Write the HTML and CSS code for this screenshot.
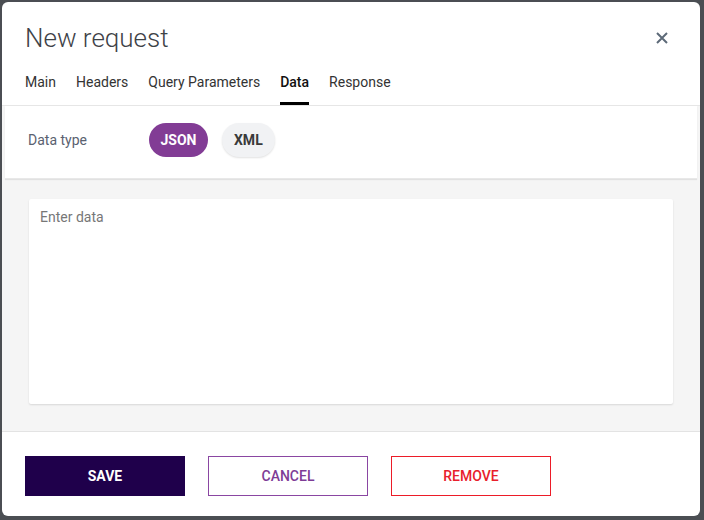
FILE: index.html
```
<!DOCTYPE html>
<html lang="en">
<head>
    <meta charset="UTF-8">
    <meta name="viewport" content="width=device-width, initial-scale=1.0">
    <title>New request</title>
    <link rel="stylesheet" href="styles.css">
</head>
<body>

<div class="dialog">
    <div class="dialog-header">
        <div class="title-row">
            <h1 class="title">New request</h1>
            <button class="close" aria-label="Close">
                <svg width="12" height="12" viewBox="0 0 12 12">
                    <path d="M1 1 L11 11 M11 1 L1 11" stroke="#5d6a78" stroke-width="2" fill="none"/>
                </svg>
            </button>
        </div>
        <div class="tabs">
            <div class="tab">Main</div>
            <div class="tab">Headers</div>
            <div class="tab">Query Parameters</div>
            <div class="tab active">Data</div>
            <div class="tab">Response</div>
        </div>
    </div>

    <div class="dialog-body">
        <div class="type-card">
            <span class="type-label">Data type</span>
            <div class="chips">
                <button class="chip selected">JSON</button>
                <button class="chip">XML</button>
            </div>
        </div>
        <textarea class="data-input" placeholder="Enter data"></textarea>
    </div>

    <div class="dialog-footer">
        <button class="btn btn-save">SAVE</button>
        <button class="btn btn-cancel">CANCEL</button>
        <button class="btn btn-remove">REMOVE</button>
    </div>
</div>

</body>
</html>
```

FILE: styles.css
```
body {
    margin: 0;
    background-color: #4b4e53;
    font-family: Roboto, "Liberation Sans", Arial, sans-serif;
}
.dialog {
    box-sizing: border-box;
    width: 698px;
    height: 514px;
    margin: 2px 0 0 2px;
    background-color: white;
    border-radius: 6px;
    overflow: hidden;
    display: flex;
    flex-direction: column;
}
.dialog-header {
    padding: 20px 24px 0 23px;
    border-bottom: 1px solid #e6e6e6;
}
.title-row {
    display: flex;
    align-items: center;
    justify-content: space-between;
}
.title {
    margin: 0;
    font-size: 26px;
    line-height: 32px;
    font-weight: 300;
    color: #3e4247;
}
.close {
    border: none;
    background: none;
    padding: 0;
    margin-right: 8px;
    display: flex;
    cursor: pointer;
}
.tabs {
    display: flex;
    gap: 20px;
    margin-top: 18px;
}
.tab {
    font-size: 14px;
    line-height: 20px;
    color: #333;
    padding-bottom: 10px;
    border-bottom: 3px solid transparent;
}
.tab.active {
    font-weight: 500;
    color: #111;
    border-bottom-color: #000;
}
.dialog-body {
    flex: 1;
    background-color: #f5f5f5;
    padding: 0 3px;
    display: flex;
    flex-direction: column;
    border-bottom: 1px solid #e3e3e3;
}
.type-card {
    display: flex;
    align-items: center;
    background-color: white;
    padding: 17px 0 21px 23px;
    box-shadow: 0 1px 1px rgba(0, 0, 0, 0.08);
    border-bottom: 1px solid #e8e8e8;
}
.type-label {
    width: 121px;
    font-size: 14px;
    color: #5a6170;
}
.chips {
    display: flex;
    gap: 14px;
}
.chip {
    height: 34px;
    padding: 0 11.5px;
    border: none;
    border-radius: 17px;
    font-family: inherit;
    font-size: 14px;
    font-weight: 700;
    color: #3a3a3a;
    background-color: #f1f2f4;
    box-shadow: 0 1px 2px rgba(0, 0, 0, 0.12);
}
.chip + .chip {
    padding: 0 12px;
}
.chip.selected {
    background-color: #823c95;
    color: white;
    box-shadow: none;
}
.data-input {
    margin: 20px 24px 27px 24px;
    flex: 1;
    border: none;
    border-radius: 2px;
    resize: none;
    background-color: white;
    box-shadow: 0 1px 2px rgba(0, 0, 0, 0.12);
    padding: 8px 11px;
    font-family: inherit;
    font-size: 14px;
    line-height: 20px;
    color: #333;
    outline: none;
}
.data-input::placeholder {
    color: #777;
}
.dialog-footer {
    display: flex;
    gap: 23px;
    padding: 24px 23px 20px 23px;
}
.btn {
    box-sizing: border-box;
    width: 160px;
    height: 40px;
    font-family: inherit;
    font-size: 14px;
    font-weight: 500;
    background-color: white;
    cursor: pointer;
}
.btn-save {
    background-color: #1f004b;
    color: white;
    border: none;
    font-weight: 700;
}
.btn-cancel {
    border: 1px solid #8a46a2;
    color: #7e3c96;
}
.btn-remove {
    border: 1px solid #ec1c28;
    color: #e8202c;
}
```
